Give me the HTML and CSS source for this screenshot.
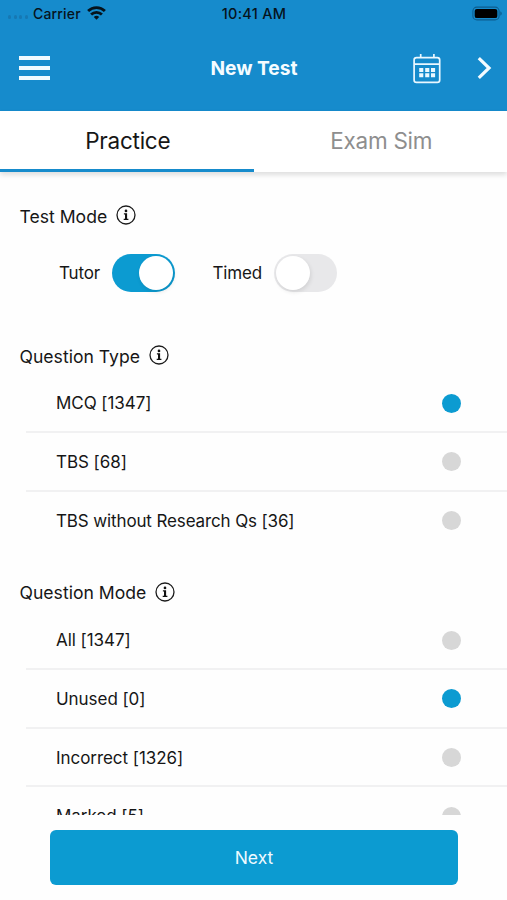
FILE: index.html
```html
<!DOCTYPE html>
<html lang="en">
<head>
<meta charset="utf-8">
<title>New Test</title>
<link rel="stylesheet" href="styles.css">
</head>
<body>
<svg class="defs" width="0" height="0" aria-hidden="true">
  <symbol id="info" viewBox="0 0 20 20">
    <circle cx="10" cy="10" r="9" fill="none" stroke="#1b1b1b" stroke-width="1.3"/>
    <circle cx="10" cy="5.9" r="1.35" fill="#111"/>
    <path d="M7.9 8.3h3.2v5.4h1.3v1.2H7.7v-1.2H9V9.5H7.9z" fill="#111"/>
  </symbol>
</svg>
<div class="app">
  <header class="header">
    <div class="status">
      <div class="carrier">
        <span class="signal"><i></i><i></i><i></i><i></i></span>
        <span class="carrier-name">Carrier</span>
        <svg class="wifi" width="19" height="14" viewBox="0 0 19 14" fill="none" stroke="#06131c" stroke-width="2.8">
          <path d="M1.1 5.1a12 12 0 0 1 16.8 0"/>
          <path d="M4.1 8.6a7.8 7.8 0 0 1 10.8 0"/>
          <path d="M9.5 13.8 6.8 11a3.9 3.9 0 0 1 5.4 0z" fill="#06131c" stroke="none"/>
        </svg>
      </div>
      <span class="clock">10:41 AM</span>
      <svg class="battery" width="31" height="15" viewBox="0 0 31 15">
        <rect x=".9" y="1.1" width="26.2" height="12.8" rx="4" fill="none" stroke="#0d5d8e" stroke-width="1.1"/>
        <rect x="2.7" y="2.9" width="22.6" height="9.2" rx="2.2" fill="#000"/>
        <path d="M28.3 5.3c2 .8 2 3.6 0 4.4z" fill="#0d5d8e"/>
      </svg>
    </div>
    <div class="nav">
      <span class="menu"><i></i><i></i><i></i></span>
      <h1 class="title">New Test</h1>
      <div class="actions">
        <svg width="28" height="31" viewBox="0 0 28 31" fill="none" stroke="#eaf8ff" stroke-width="1.7">
          <rect x="1.1" y="4.7" width="25.6" height="24.6" rx="2.4"/>
          <path d="M1.1 11.1h25.6M7.7.9v4M20.9.9v4"/>
          <path d="M6.2 17h4.1M12.2 17h4.1M18 17h4.1M6.2 22.3h4.1M12.2 22.3h4.1M18 22.3h4.1" stroke-width="4"/>
        </svg>
        <svg width="15" height="22" viewBox="0 0 15 22" fill="none" stroke="#f4fbff" stroke-width="3.2">
          <path d="M1.8 1.2 12 11 1.8 20.8"/>
        </svg>
      </div>
    </div>
  </header>
  <nav class="tabs">
    <div class="tab active"><span>Practice</span></div>
    <div class="tab"><span>Exam Sim</span></div>
  </nav>
  <main class="content">
    <section class="mode">
      <h2 class="heading"><span>Test Mode</span><svg class="info"><use href="#info"/></svg></h2>
      <div class="switches">
        <span>Tutor</span><span class="switch on"></span>
        <span>Timed</span><span class="switch"></span>
      </div>
    </section>
    <section class="group">
      <h2 class="heading"><span>Question Type</span><svg class="info"><use href="#info"/></svg></h2>
      <ul class="list">
        <li><span>MCQ [1347]</span><b class="dot selected"></b></li>
        <li><span>TBS [68]</span><b class="dot"></b></li>
        <li><span class="long">TBS without Research Qs [36]</span><b class="dot"></b></li>
      </ul>
    </section>
    <section class="group">
      <h2 class="heading"><span>Question Mode</span><svg class="info"><use href="#info"/></svg></h2>
      <ul class="list">
        <li><span>All [1347]</span><b class="dot"></b></li>
        <li><span>Unused [0]</span><b class="dot selected"></b></li>
        <li><span>Incorrect [1326]</span><b class="dot"></b></li>
        <li><span>Marked [5]</span><b class="dot"></b></li>
      </ul>
    </section>
  </main>
  <footer class="footer"><button class="next">Next</button></footer>
</div>
</body>
</html>
```

FILE: styles.css
```css
* { box-sizing: border-box; }
body { margin: 0; background: #fefefe; color: #161616; font-family: Inter, "Liberation Sans", sans-serif; }
h1, h2, ul { margin: 0; padding: 0; font-weight: 400; }
.defs { display: block; height: 0; }
.app { height: 900px; display: flex; flex-direction: column; overflow: hidden; }

.header { height: 110.5px; flex: none; background: #168bcc; }
.status { height: 26px; display: grid; grid-template-columns: 1fr auto 1fr; align-items: center; padding: 0 5px 0 8px; color: #06131c; font-size: 14px; font-weight: 500; }
.carrier { display: flex; align-items: center; }
.carrier-name { letter-spacing: .2px; }
.clock { font-size: 14.5px; letter-spacing: .25px; margin-right: 2px; }
.signal { display: flex; gap: 2.4px; margin: 8px 5px 0 0; }
.signal i { width: 3.2px; height: 3.2px; border-radius: 50%; background: #1678b3; }
.wifi { margin-left: 6px; }
.battery { justify-self: end; margin-right: -1px; }
.nav { height: 84px; display: grid; grid-template-columns: 1fr auto 1fr; align-items: center; padding: 0 15px 0 19px; }
.menu { width: 31px; display: grid; gap: 5.8px; }
.menu i { height: 4px; background: #f0faff; }
.title { color: #f5fcff; font-size: 19.2px; font-weight: 700; margin-right: 3px; }
.actions { display: flex; justify-content: flex-end; align-items: center; gap: 36px; }

.tabs { height: 61.5px; flex: none; display: flex; background: #fff; box-shadow: 0 3px 5px rgba(0, 0, 0, .13); position: relative; }
.tab { flex: 1; display: flex; align-items: center; justify-content: center; padding: 2px 0 0 2px; border-bottom: 3px solid transparent; font-size: 22.5px; letter-spacing: -.25px; color: #8e8e8e; }
.tab.active { color: #161616; border-color: #168bcc; }

.content { height: 643px; flex: none; overflow: hidden; }
.heading { height: 30px; display: flex; align-items: center; gap: 9px; padding-left: 19.5px; font-size: 17.6px; }
.info { width: 20px; height: 20px; margin-top: -2px; }
.mode { height: 169px; padding-top: 29px; }
.switches { display: flex; align-items: center; padding: 23px 0 0 59px; font-size: 17px; letter-spacing: -.15px; }
.switch { width: 62.5px; height: 38px; margin-left: 12px; padding: 2px; border-radius: 19px; background: #e8e8ea; display: flex; }
.switch::before { content: ""; width: 34px; height: 34px; border-radius: 50%; background: #fff; box-shadow: 1px 2px 4px rgba(0, 0, 0, .1); }
.switch.on { background: #0c9bd1; justify-content: flex-end; margin-right: 38px; }
.group { margin-bottom: 27.5px; }
.list { list-style: none; margin: 3.5px 0 0 26px; }
.list li { height: 58.65px; display: flex; align-items: center; justify-content: space-between; padding: 1px 46px 0 30px; border-bottom: 2px solid #f1f1f2; font-size: 17px; letter-spacing: -.05px; }
.list li:last-child { border-bottom-color: transparent; }
.list .long { letter-spacing: -.13px; }
.dot { width: 19px; height: 19px; border-radius: 50%; background: #d7d7d7; }
.dot.selected { background: #0c9bd1; }

.footer { padding: 15px 49px 0 50px; }
.next { display: block; width: 100%; height: 55px; border: 0; border-radius: 6px; background: #0c9bd1; color: #eefaff; font: 17.5px Inter, "Liberation Sans", sans-serif; }
```
